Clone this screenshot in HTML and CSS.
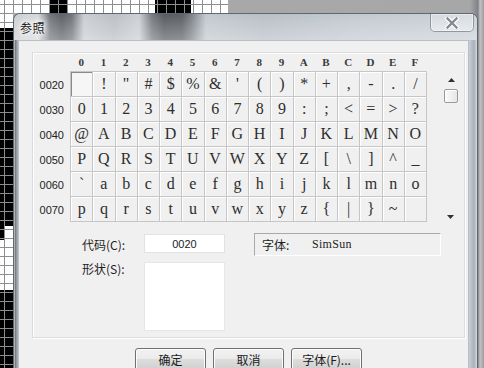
FILE: index.html
```html
<!DOCTYPE html>
<html lang="zh">
<head>
<meta charset="utf-8">
<title>参照</title>
<link rel="stylesheet" href="styles.css">
</head>
<body>
<div class="window">
  <div class="titlebar">
    <span class="title">参照</span>
    <button class="close" aria-label="关闭">
      <svg width="14" height="12" viewBox="0 0 14 12">
        <path d="M2.5 1.5 L11.5 10.5 M11.5 1.5 L2.5 10.5" stroke="#fff" stroke-width="4.6" stroke-linecap="square" fill="none"/>
        <path d="M2.5 1.5 L11.5 10.5 M11.5 1.5 L2.5 10.5" stroke="#868b91" stroke-width="2.4" stroke-linecap="square" fill="none"/>
      </svg>
    </button>
  </div>
  <div class="client">
    <div class="panel">
      <div class="colhead">
        <span>0</span><span>1</span><span>2</span><span>3</span><span>4</span><span>5</span><span>6</span><span>7</span>
        <span>8</span><span>9</span><span>A</span><span>B</span><span>C</span><span>D</span><span>E</span><span>F</span>
      </div>
      <div class="gridwrap">
        <div class="rowlabels">
          <span>0020</span><span>0030</span><span>0040</span><span>0050</span><span>0060</span><span>0070</span>
        </div>
        <div class="cells">
          <span class="cell sel"></span><span class="cell">!</span><span class="cell">"</span><span class="cell">#</span><span class="cell">$</span><span class="cell">%</span><span class="cell">&amp;</span><span class="cell">'</span><span class="cell">(</span><span class="cell">)</span><span class="cell">*</span><span class="cell">+</span><span class="cell">,</span><span class="cell">-</span><span class="cell">.</span><span class="cell">/</span>
          <span class="cell">0</span><span class="cell">1</span><span class="cell">2</span><span class="cell">3</span><span class="cell">4</span><span class="cell">5</span><span class="cell">6</span><span class="cell">7</span><span class="cell">8</span><span class="cell">9</span><span class="cell">:</span><span class="cell">;</span><span class="cell">&lt;</span><span class="cell">=</span><span class="cell">&gt;</span><span class="cell">?</span>
          <span class="cell">@</span><span class="cell">A</span><span class="cell">B</span><span class="cell">C</span><span class="cell">D</span><span class="cell">E</span><span class="cell">F</span><span class="cell">G</span><span class="cell">H</span><span class="cell">I</span><span class="cell">J</span><span class="cell">K</span><span class="cell">L</span><span class="cell">M</span><span class="cell">N</span><span class="cell">O</span>
          <span class="cell">P</span><span class="cell">Q</span><span class="cell">R</span><span class="cell">S</span><span class="cell">T</span><span class="cell">U</span><span class="cell">V</span><span class="cell">W</span><span class="cell">X</span><span class="cell">Y</span><span class="cell">Z</span><span class="cell">[</span><span class="cell">\</span><span class="cell">]</span><span class="cell">^</span><span class="cell">_</span>
          <span class="cell">`</span><span class="cell">a</span><span class="cell">b</span><span class="cell">c</span><span class="cell">d</span><span class="cell">e</span><span class="cell">f</span><span class="cell">g</span><span class="cell">h</span><span class="cell">i</span><span class="cell">j</span><span class="cell">k</span><span class="cell">l</span><span class="cell">m</span><span class="cell">n</span><span class="cell">o</span>
          <span class="cell">p</span><span class="cell">q</span><span class="cell">r</span><span class="cell">s</span><span class="cell">t</span><span class="cell">u</span><span class="cell">v</span><span class="cell">w</span><span class="cell">x</span><span class="cell">y</span><span class="cell">z</span><span class="cell">{</span><span class="cell">|</span><span class="cell">}</span><span class="cell">~</span><span class="cell"></span>
        </div>
        <div class="scrollbar">
          <svg class="arrow up" width="7" height="4" viewBox="0 0 7 4"><path d="M3.5 0 L7 4 L0 4 Z" fill="#333"/></svg>
          <div class="thumb"></div>
          <svg class="arrow down" width="7" height="4" viewBox="0 0 7 4"><path d="M0 0 L7 0 L3.5 4 Z" fill="#333"/></svg>
        </div>
      </div>
      <div class="info">
        <span class="lbl lbl-code">代码(C):</span>
        <div class="codebox">0020</div>
        <div class="fontbox"><span class="fontlbl">字体:</span><span class="fontname">SimSun</span></div>
        <span class="lbl lbl-shape">形状(S):</span>
        <div class="shapebox"></div>
      </div>
    </div>
    <div class="buttons">
      <button class="btn">确定</button>
      <button class="btn">取消</button>
      <button class="btn">字体(F)...</button>
    </div>
  </div>
</div>
</body>
</html>
```
FILE: styles.css
```css
html, body {
  margin: 0;
  padding: 0;
}

body {
  width: 484px;
  height: 368px;
  overflow: hidden;
  font-family: "Noto Sans CJK SC", "Liberation Sans", sans-serif;
  background:
    repeating-linear-gradient(90deg, #8e8e8e 0 1px, transparent 1px 9px) 4px 0 / 224px 13px no-repeat,
    repeating-linear-gradient(180deg, #8e8e8e 0 1px, transparent 1px 9px) 0 4px / 228px 9px no-repeat,
    repeating-linear-gradient(90deg, #8e8e8e 0 1px, transparent 1px 9px) 4px 0 / 9px 368px no-repeat,
    repeating-linear-gradient(180deg, #8e8e8e 0 1px, transparent 1px 9px) 0 4px / 13px 364px no-repeat,
    linear-gradient(#000, #000) 50px 0 / 18px 13px no-repeat,
    linear-gradient(#000, #000) 155px 0 / 36px 13px no-repeat,
    linear-gradient(#000, #000) 0 28px / 13px 198px no-repeat,
    linear-gradient(#000, #000) 0 226px / 5px 14px no-repeat,
    linear-gradient(#000, #000) 0 290px / 13px 78px no-repeat,
    linear-gradient(#fff, #fff) 0 0 / 228px 13px no-repeat,
    linear-gradient(#fff, #fff) 0 0 / 13px 368px no-repeat,
    linear-gradient(90deg, #a9a9a9 0, #a7a7a7 470px, #7e8287 478px, #c4c4c4 480px, #9c9c9c 484px);
}

.window {
  margin: 13px 0 0 13px;
  width: 465px;
  height: 372px;
  box-sizing: border-box;
  border: 1px solid #60676e;
  border-bottom: none;
  border-radius: 7px 7px 0 0;
  background: linear-gradient(90deg, #55595d 0, #9ea4aa 3px, #c3cad1 5px, #c7ced5 455px, #aab1b8 460px, #d3d9df 463px);
  display: flex;
  flex-direction: column;
  box-shadow: inset 1px 1px 0 rgba(255, 255, 255, 0.5);
}

.titlebar {
  height: 26px;
  flex: none;
  display: flex;
  align-items: center;
  border-radius: 6px 6px 0 0;
  background:
    linear-gradient(180deg, rgba(255, 255, 255, 0.05) 0, rgba(255, 255, 255, 0.35) 100%),
    linear-gradient(90deg, #c9cdd1 0, #d3d6d9 24px, #6c7075 36px, #55595e 48px, #6a6e73 58px, #c7cbcf 70px, #b8bcc0 100px, #c9cdd1 125px, #6f7378 138px, #4f5358 150px, #53575c 168px, #7a7e83 178px, #c0c6cc 192px, #b4bcc4 250px, #bfc7cf 340px, #c7ced5 464px);
}

.title {
  padding-left: 6px;
  font-size: 12px;
  color: #1b1b1b;
  text-shadow: 0 0 4px #fff, 0 0 6px #fff, 0 0 8px #fff;
  letter-spacing: 0.5px;
}

.close {
  align-self: flex-start;
  margin-left: auto;
  margin-right: 3px;
  width: 44px;
  height: 18px;
  padding: 0;
  border: 1px solid rgba(80, 90, 100, 0.55);
  border-top: none;
  border-radius: 0 0 5px 5px;
  background: linear-gradient(180deg, rgba(255, 255, 255, 0.25), rgba(255, 255, 255, 0.45));
  box-shadow: inset 0 0 0 1px rgba(255, 255, 255, 0.45);
  display: flex;
  align-items: center;
  justify-content: center;
}

.client {
  flex: 1;
  margin: 0 8px 0 4px;
  background: #f0f0f0;
  border: 1px solid #b7bfc7;
  border-bottom: none;
  padding: 11px 3px 0 13px;
}

.panel {
  border: 1px solid #dcdcdc;
  box-shadow: inset 1px 1px 0 #fff, 1px 1px 0 #fff;
  padding-bottom: 6px;
}

.colhead {
  margin-left: 36px;
  width: 357px;
  box-sizing: border-box;
  padding-left: 1px;
  height: 18px;
  display: grid;
  grid-template-columns: repeat(16, 1fr);
  align-items: center;
  text-align: center;
  font-family: "Liberation Serif", serif;
  font-size: 11px;
  font-weight: bold;
  color: #3a3a3a;
}

.gridwrap {
  display: flex;
}

.rowlabels {
  width: 37px;
  box-sizing: border-box;
  padding: 1px 6px 0 0;
  display: grid;
  grid-template-rows: repeat(6, 25px);
  align-items: center;
  text-align: right;
  font: 11px "Liberation Sans", sans-serif;
  color: #222;
}

.cells {
  width: 357px;
  box-sizing: border-box;
  border-left: 1px solid #c6c6c6;
  border-top: 1px solid #c6c6c6;
  display: grid;
  grid-template-columns: repeat(16, 1fr);
  grid-template-rows: repeat(6, 25px);
}

.cell {
  display: flex;
  align-items: center;
  justify-content: center;
  border-right: 1px solid #c6c6c6;
  border-bottom: 1px solid #c6c6c6;
  box-shadow: inset 1px 1px 0 #fff;
  background: #f0f0f0;
  font-family: "Liberation Serif", serif;
  font-size: 16px;
  color: #2e2e2e;
}

.cell.sel {
  background: #f6f6f6;
  box-shadow: inset 1px 1px 0 #8a8a8a;
}

.scrollbar {
  width: 16px;
  margin-left: 16px;
  display: flex;
  flex-direction: column;
  align-items: center;
}

.arrow.up {
  margin-top: 7px;
}

.thumb {
  margin-top: 7px;
  width: 14px;
  height: 14px;
  box-sizing: border-box;
  border: 1px solid #9b9b9b;
  border-radius: 2px;
  background: linear-gradient(90deg, #fbfbfb, #e6e6e6);
  box-shadow: inset 1px 1px 0 #fff;
}

.arrow.down {
  margin-top: auto;
  margin-bottom: 3px;
  margin-right: 1px;
}

.info {
  margin-top: 11px;
  padding-left: 49px;
  display: grid;
  grid-template-columns: 62px 81px 29px 187px;
  grid-template-rows: 23px 69px;
  row-gap: 6px;
}

.lbl {
  font-size: 12px;
  color: #1e1e1e;
  line-height: 14px;
}

.lbl-code {
  grid-column: 1;
  grid-row: 1;
  align-self: center;
}

.lbl-shape {
  grid-column: 1;
  grid-row: 2;
  align-self: start;
}

.codebox {
  grid-column: 2;
  grid-row: 1;
  align-self: start;
  margin-top: 1px;
  height: 19px;
  box-sizing: border-box;
  background: #fff;
  border: 1px solid #e2e2e2;
  display: flex;
  align-items: center;
  justify-content: center;
  font: 11px "Liberation Sans", sans-serif;
  color: #222;
}

.fontbox {
  grid-column: 4;
  grid-row: 1;
  height: 23px;
  box-sizing: border-box;
  border: 1px solid;
  border-color: #a9a9a9 #fff #fff #a9a9a9;
  background: #f0f0f0;
  display: flex;
  align-items: center;
  padding-left: 7px;
}

.fontlbl {
  width: 50px;
  font-size: 12px;
  color: #1e1e1e;
}

.fontname {
  font-family: "Liberation Serif", serif;
  font-size: 12px;
  letter-spacing: 0.3px;
  color: #1e1e1e;
}

.shapebox {
  grid-column: 2;
  grid-row: 2;
  background: #fff;
  border: 1px solid #e6e6e6;
  box-sizing: border-box;
}

.buttons {
  margin: 10px 0 0 103px;
  display: flex;
  gap: 7px;
}

.btn {
  width: 71px;
  height: 23px;
  padding: 0;
  border: 1px solid #707070;
  border-radius: 3px;
  background: linear-gradient(180deg, #f2f2f2 0%, #ebebeb 45%, #dddddd 50%, #cfcfcf 100%);
  box-shadow: inset 0 0 0 1px #fcfcfc;
  font: 12px "Noto Sans CJK SC", sans-serif;
  color: #1b1b1b;
}
```
